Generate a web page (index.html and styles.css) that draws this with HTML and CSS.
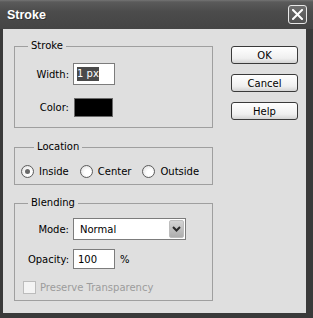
FILE: index.html
```html
<!DOCTYPE html>
<html lang="en">
<head>
    <meta charset="UTF-8">
    <title>Stroke</title>
    <link rel="stylesheet" href="styles.css">
</head>
<body>

<div class="window">
    <!-- title bar -->
    <div class="titlebar">
        <span class="title">Stroke</span>
        <button class="close-btn" aria-label="Close">
            <svg width="11" height="11" viewBox="0 0 11 11">
                <path d="M1 1 L10 10 M10 1 L1 10" stroke="#fff" stroke-width="2" stroke-linecap="square"/>
            </svg>
        </button>
    </div>

    <div class="frame">
        <div class="content">
            <div class="panels">
                <!-- Stroke -->
                <fieldset class="group stroke-group">
                    <legend>Stroke</legend>
                    <div class="form-grid">
                        <label>Width:</label>
                        <div class="text-field width-field"><span class="selected">1 px</span></div>
                        <label>Color:</label>
                        <div class="swatch"></div>
                    </div>
                </fieldset>

                <!-- Location -->
                <fieldset class="group location-group">
                    <legend>Location</legend>
                    <div class="radio-row">
                        <span class="radio-item"><span class="radio checked"></span>Inside</span>
                        <span class="radio-item"><span class="radio"></span>Center</span>
                        <span class="radio-item"><span class="radio"></span>Outside</span>
                    </div>
                </fieldset>

                <!-- Blending -->
                <fieldset class="group blending-group">
                    <legend>Blending</legend>
                    <div class="form-grid blend-grid">
                        <label>Mode:</label>
                        <div class="select">
                            <span>Normal</span>
                            <span class="select-arrow">
                                <svg width="9" height="6" viewBox="0 0 9 6">
                                    <path d="M1 1 L4.5 4.5 L8 1" fill="none" stroke="#2a2a2a" stroke-width="2"/>
                                </svg>
                            </span>
                        </div>
                        <label>Opacity:</label>
                        <div class="opacity-row">
                            <div class="text-field opacity-field">100</div>
                            <span class="unit">%</span>
                        </div>
                    </div>
                    <div class="check-row">
                        <span class="checkbox"></span>Preserve Transparency
                    </div>
                </fieldset>
            </div>

            <!-- buttons -->
            <div class="actions">
                <button class="btn">OK</button>
                <button class="btn">Cancel</button>
                <button class="btn">Help</button>
            </div>
        </div>
    </div>
</div>

</body>
</html>
```

FILE: styles.css
```css
* {
    box-sizing: border-box;
}
body {
    margin: 0;
    background-color: #2f2f2f;
    font-family: "DejaVu Sans", sans-serif;
    font-size: 10px;
    color: #000;
}
.window {
    width: 313px;
    height: 318px;
    display: flex;
    flex-direction: column;
    background-color: #3a3a3a;
}
.titlebar {
    height: 29px;
    flex: none;
    display: flex;
    align-items: center;
    justify-content: space-between;
    padding: 0 6px 0 7px;
    background: linear-gradient(#747474 0, #5a5a5a 2px, #4c4c4c 40%, #444 100%);
}
.title {
    font-family: "Liberation Sans", sans-serif;
    font-weight: bold;
    font-size: 12.5px;
    color: #fff;
    text-shadow: 1px 1px 0 #333;
}
.close-btn {
    width: 19px;
    height: 19px;
    padding: 0;
    display: flex;
    align-items: center;
    justify-content: center;
    border: 1px solid #e8e8e8;
    border-radius: 3px;
    background: linear-gradient(#6e6e6e, #535353);
}
.frame {
    flex: 1;
    display: flex;
    padding: 0 7px 5px 3px;
}
.content {
    flex: 1;
    display: flex;
    gap: 18px;
    padding: 11px 0 0 11px;
    background-color: #dfdfdf;
}
.panels {
    width: 199px;
}
.group {
    margin: 0;
    border: 1px solid #9f9f9f;
}
.group legend {
    margin-left: 13px;
    padding: 0 3px;
    line-height: 12px;
}
.stroke-group {
    padding: 11px 0 10px 0;
}
.location-group {
    margin-top: 13px;
    padding: 12px 0 6px 6px;
}
.blending-group {
    margin-top: 12px;
    padding: 9px 0 6px 0;
}
.form-grid {
    display: grid;
    grid-template-columns: 54px auto;
    column-gap: 4px;
    row-gap: 13px;
    align-items: center;
    justify-items: start;
}
.form-grid label {
    justify-self: end;
}
.blend-grid {
    row-gap: 9px;
}
.text-field {
    width: 42px;
    background-color: #fff;
    border: 1px solid #7c7c7c;
    padding-left: 3px;
    display: flex;
    align-items: center;
}
.width-field {
    height: 22px;
}
.selected {
    background-color: #4a4a4a;
    color: #fff;
    line-height: 14px;
}
.swatch {
    width: 39px;
    height: 19px;
    margin-left: 1px;
    background-color: #000;
    border: 1px solid #6a6a6a;
}
.radio-row {
    display: flex;
    align-items: center;
}
.radio-item {
    display: flex;
    align-items: center;
    gap: 5px;
    margin-right: 11px;
}
.radio {
    width: 13px;
    height: 13px;
    border-radius: 50%;
    border: 1px solid #5c5c5c;
    background: radial-gradient(circle at 60% 60%, #fff 30%, #d8d8d8 100%);
    display: flex;
    align-items: center;
    justify-content: center;
}
.radio.checked::after {
    content: "";
    width: 5px;
    height: 5px;
    border-radius: 50%;
    background-color: #6a6a6a;
}
.select {
    width: 113px;
    height: 22px;
    background-color: #fff;
    border: 1px solid #7c7c7c;
    display: flex;
    align-items: center;
    justify-content: space-between;
    padding: 0 1px 0 6px;
}
.select-arrow {
    width: 15px;
    height: 18px;
    border-radius: 2px;
    border: 1px solid #bdbdbd;
    background: linear-gradient(#d4d4d4, #adadad);
    display: flex;
    align-items: center;
    justify-content: center;
}
.opacity-row {
    display: flex;
    align-items: center;
}
.opacity-field {
    height: 20px;
    padding-left: 4px;
}
.unit {
    margin-left: 5px;
}
.check-row {
    display: flex;
    align-items: center;
    gap: 4px;
    margin-top: 12px;
    padding-left: 8px;
    color: #9c9c9c;
}
.checkbox {
    width: 13px;
    height: 13px;
    border: 1px solid #bcbcbc;
    background-color: #f4f4f4;
}
.actions {
    display: flex;
    flex-direction: column;
    gap: 10px;
    padding-top: 6px;
}
.btn {
    width: 67px;
    height: 18px;
    padding: 0;
    font-family: "DejaVu Sans", sans-serif;
    font-size: 10px;
    color: #000;
    border: 1px solid #3a3a3a;
    border-radius: 3px;
    background: linear-gradient(#fff, #efefef 70%, #d4d4d4);
}
```
